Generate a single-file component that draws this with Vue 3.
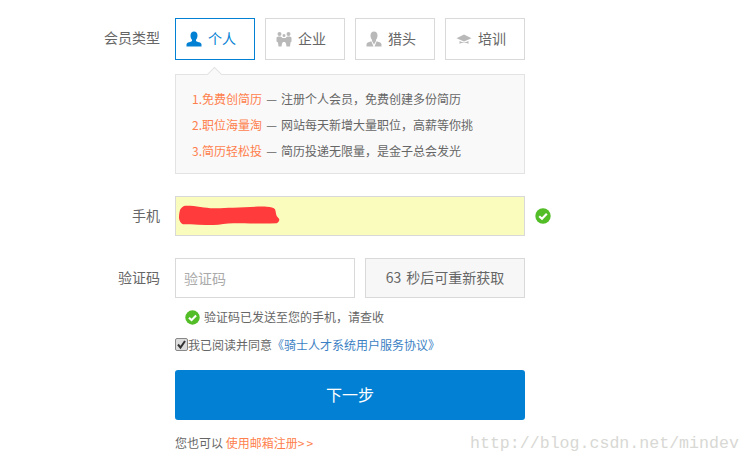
<script setup>
const tabs = [
  { name: '个人', icon: 'person', active: true },
  { name: '企业', icon: 'group' },
  { name: '猎头', icon: 'suit' },
  { name: '培训', icon: 'cap' }
]
const benefits = [
  ['1.免费创简历', '注册个人会员，免费创建多份简历'],
  ['2.职位海量淘', '网站每天新增大量职位，高薪等你挑'],
  ['3.简历轻松投', '简历投递无限量，是金子总会发光']
]
</script>

<template>
  <div class="page">
    <div class="row type-row">
      <div class="label type-label">会员类型</div>
      <div class="tabs">
        <div v-for="t in tabs" :key="t.name" class="tab" :class="{ active: t.active }">
          <svg class="tab-icon" viewBox="0 0 16 16" width="16" height="16">
            <path v-if="t.icon === 'person'" d="M4.500 4.500C4.500 2 6 .5 8 .5s3.500 1.500 3.500 4c0 2-.7 3.300-1.500 4.200v1c0 .6 1.500 1.100 3 1.500 1.300.4 2.500 1 2.500 2.300v2H.5v-2c0-1.300 1.200-1.900 2.500-2.300 1.500-.4 3-.9 3-1.500v-1C5.200 7.800 4.500 6.500 4.500 4.500z" />
            <path v-else-if="t.icon === 'group'" d="M3.500 1a2 2 0 1 1 0 4 2 2 0 0 1 0-4zM12.500 1a2 2 0 1 1 0 4 2 2 0 0 1 0-4zM8 3a1.500 1.500 0 1 1 0 3 1.500 1.500 0 0 1 0-3zM.5 7c0-1 1.200-1.500 3-1.500 1.200 0 2 .3 2.300.7L6.300 7H9.700l.5-.8c.3-.4 1.100-.7 2.300-.7 1.800 0 3 .5 3 1.500v3.500l-1 1-.5 4H10.500L10 12.500l-1-1.500H7L6 12.500 5.500 15.500H2.500l-.5-4-1.500-1z" />
            <path v-else-if="t.icon === 'suit'" d="M4.500 4.500C4.500 2 6 .5 8 .5s3.500 1.500 3.500 4c0 2-.7 3.300-1.500 4.200v1.300l-2 3.500-2-3.500V8.700C5.200 7.800 4.500 6.500 4.500 4.500zM5.300 10.300l2.200 5.200H.5v-2c0-1.500 1.700-2.400 4.800-3.200zM10.700 10.300c3.100.8 4.800 1.700 4.800 3.200v2H8.500z" />
            <path v-else d="M8 3.500 15.500 7.200 8 10.500.5 7.200zM3.500 10l4.500 1.900L12.500 10v2.700c-1.200-.7-2.700-1-4.500-1s-3.300.3-4.500 1z" />
          </svg>
          <span class="tab-name">{{ t.name }}</span>
        </div>
      </div>
    </div>

    <div class="panel">
      <span class="arrow"></span>
      <p v-for="b in benefits" :key="b[0]" class="benefit">
        <span class="orange">{{ b[0] }}</span> — {{ b[1] }}
      </p>
    </div>

    <div class="row phone-row">
      <div class="label">手机</div>
      <div class="phone">
        <svg class="scribble" viewBox="0 0 102 20" width="102" height="20">
          <path d="M1 5C2 3 4 1 6 .7c9-.4 20 2.300 28.300 2.600 7 .2 13-.6 20-.6 11 0 23-1.500 33.400-1 4 .3 7.300 1 8.300 2.600.8 2 .8 4.700 1.700 6.700 1 1.500 2.800 2.500 2.600 4-.2 1.500-1.500 2.800-2.600 3.300-13 .6-30 0-43.400 0-7 0-13 1.700-20 1.700-10 0-20 0-30-.7C2 18.800.2 15.500 0 13-.1 10 .5 7 1 5z" />
        </svg>
      </div>
      <svg class="ok" viewBox="0 0 16 16" width="16" height="16">
        <circle cx="8" cy="8" r="7.700" fill="#52bd26" />
        <path d="M4.200 8.200 7 10.800l4.800-5" fill="none" stroke="#fff" stroke-width="2.200" />
      </svg>
    </div>

    <div class="row code-row">
      <div class="label">验证码</div>
      <div class="code-input">验证码</div>
      <div class="code-btn">63 秒后可重新获取</div>
    </div>

    <div class="sent">
      <svg viewBox="0 0 16 16" width="15" height="15">
        <circle cx="8" cy="8" r="7.700" fill="#52bd26" />
        <path d="M4.200 8.200 7 10.800l4.800-5" fill="none" stroke="#fff" stroke-width="2.200" />
      </svg>
      <span class="sent-text">验证码已发送至您的手机，请查收</span>
    </div>

    <div class="agree">
      <span class="check">
        <svg viewBox="0 0 11 11" width="11" height="11">
          <path d="M2 5.500 4.500 8.500 9 2" fill="none" stroke="#333" stroke-width="2" />
        </svg>
      </span>
      <span>我已阅读并同意</span><span class="link">《骑士人才系统用户服务协议》</span>
    </div>

    <div class="submit">下一步</div>

    <div class="foot">您也可以 <span class="orange">使用邮箱注册<span class="more">&gt;&gt;</span></span></div>

    <div class="watermark">http://blog.csdn.net/mindev</div>
  </div>
</template>

<style>
html, body { margin: 0; background: #fff; }
</style>

<style scoped>
.page {
  position: relative;
  width: 751px;
  height: 464px;
  overflow: hidden;
  padding-top: 18px;
  box-sizing: border-box;
  background: #fff;
  color: #666;
  font-family: "Noto Sans CJK SC", "Liberation Sans", sans-serif;
  font-size: 13px;
}
.row { display: flex; align-items: center; }
.label {
  width: 160px;
  text-align: right;
  margin-right: 15px;
  padding-bottom: 2px;
  font-size: 14px;
  line-height: 20px;
  color: #666;
  flex: none;
}
.type-label { padding-bottom: 4px; }
.tabs { display: flex; gap: 10px; }
.tab {
  width: 80px;
  height: 42px;
  box-sizing: border-box;
  border: 1px solid #d9d9d9;
  display: flex;
  align-items: center;
  padding-left: 10px;
  gap: 6px;
  font-size: 14px;
  color: #666;
}
.tab-name { padding-bottom: 2px; }
.tab.active { border-color: #0281d4; color: #0281d4; }
.tab-icon { fill: #b9b9b9; flex: none; }
.tab.active .tab-icon { fill: #0281d4; }
.panel {
  position: relative;
  width: 350px;
  height: 100px;
  box-sizing: border-box;
  margin: 14px 0 0 175px;
  padding: 11px 15px 0 16px;
  background: #f9f9f9;
  border: 1px solid #e3e3e3;
}
.arrow {
  position: absolute;
  left: 33px;
  top: -6px;
  width: 10px;
  height: 10px;
  background: #f9f9f9;
  border-left: 1px solid #e3e3e3;
  border-top: 1px solid #e3e3e3;
  transform: rotate(45deg);
}
.benefit {
  margin: 0;
  height: 26px;
  line-height: 26px;
  font-size: 12px;
  word-spacing: 1.500px;
  color: #666;
  white-space: nowrap;
}
.orange { color: #ff7f4d; }
.more { letter-spacing: 2px; }
.phone-row { margin-top: 22px; }
.phone {
  width: 350px;
  height: 40px;
  box-sizing: border-box;
  background: #fafcbd;
  border: 1px solid #d9d9d9;
  display: flex;
  align-items: center;
  padding-left: 3px;
  padding-bottom: 2px;
}
.scribble { fill: #ff3b3b; }
.ok { margin-left: 10px; }
.code-row { margin-top: 22px; }
.code-input {
  width: 180px;
  height: 40px;
  box-sizing: border-box;
  border: 1px solid #d9d9d9;
  padding-left: 8px;
  line-height: 38px;
  font-size: 14px;
  color: #aaa;
}
.code-btn {
  width: 160px;
  height: 40px;
  margin-left: 10px;
  box-sizing: border-box;
  border: 1px solid #d9d9d9;
  background: #f7f7f7;
  text-align: center;
  line-height: 36px;
  font-size: 14px;
  word-spacing: 2px;
  color: #666;
}
.sent {
  display: flex;
  align-items: center;
  gap: 4px;
  margin: 10px 0 0 185px;
  height: 18px;
  font-size: 12px;
  color: #666;
  white-space: nowrap;
}
.sent-text { padding-bottom: 2px; }
.agree {
  display: flex;
  align-items: center;
  margin: 9px 0 0 175px;
  height: 18px;
  font-size: 12px;
  color: #666;
  white-space: nowrap;
}
.check {
  width: 11px;
  height: 11px;
  flex: none;
  display: block;
  background: #ddd;
  border: 1px solid #888;
  border-radius: 2px;
  box-sizing: content-box;
  margin-right: 0;
  line-height: 0;
}
.link { color: #3b7fc4; }
.submit {
  width: 350px;
  height: 50px;
  margin: 17px 0 0 175px;
  border-radius: 3px;
  background: #0281d4;
  color: #fff;
  text-align: center;
  line-height: 48px;
  font-size: 16px;
}
.foot {
  margin: 14px 0 0 175px;
  height: 18px;
  line-height: 18px;
  font-size: 12px;
  color: #666;
  white-space: nowrap;
}
.watermark {
  position: absolute;
  left: 470px;
  top: 433px;
  font-family: "Liberation Mono", monospace;
  font-size: 16.600px;
  line-height: 22px;
  color: #d8d8d4;
  white-space: nowrap;
}
</style>
